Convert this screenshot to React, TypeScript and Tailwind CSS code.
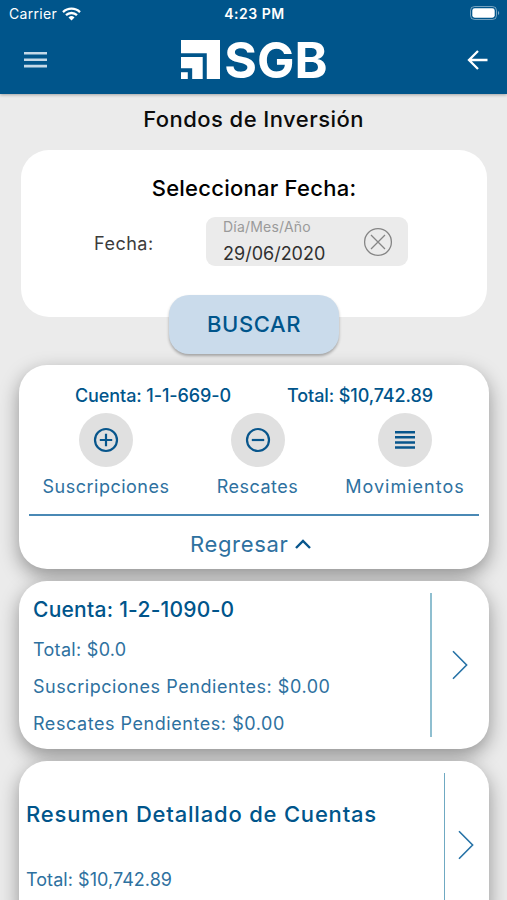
import React from 'react';

interface CardProps {
  children: React.ReactNode;
  className?: string;
}

const Card: React.FC<CardProps> = ({ children, className = '' }) => (
  <section className={`ml-[19px] w-[470px] rounded-[28px] bg-white shadow-[0_7px_19px_rgba(0,0,0,0.38)] ${className}`}>
    {children}
  </section>
);

interface ActionProps {
  label: string;
  labelClass?: string;
  children: React.ReactNode;
}

const Action: React.FC<ActionProps> = ({ label, labelClass = '', children }) => (
  <button className="flex flex-col items-center">
    <span className="flex h-[54px] w-[54px] items-center justify-center rounded-full bg-[#e0e0e0] text-[#08568c]">
      {children}
    </span>
    <span className={`mt-2 text-[18px] leading-6 text-[#2e71a0] ${labelClass}`}>{label}</span>
  </button>
);

const ChevronRight = () => (
  <svg width="16" height="30" viewBox="0 0 16 30" fill="none" stroke="#2672a6" strokeWidth="1.6">
    <path d="M1 1.2 14.6 15 1 28.8" />
  </svg>
);

const StatusBar = () => (
  <div className="flex h-7 items-center justify-between pr-[7px] pl-[9px] text-white">
    <div className="flex w-[90px] items-center gap-[5px] pb-px">
      <span className="text-[14px] tracking-[0.3px]">Carrier</span>
      <svg width="19" height="14" viewBox="0 0 19 14" fill="none" stroke="#fff">
        <path d="M1 5.1a12.2 12.2 0 0 1 17 0" strokeWidth="2.3" />
        <path d="M4 8.2a8 8 0 0 1 11 0" strokeWidth="2.3" />
        <path d="M6.5 10.5a4.4 4.4 0 0 1 6 0L9.5 13.6z" fill="#fff" stroke="none" />
      </svg>
    </div>
    <span className="pb-px text-[14px] font-semibold tracking-[0.5px]">4:23 PM</span>
    <div className="flex w-[90px] justify-end pb-[2px]">
      <svg width="30" height="14" viewBox="0 0 30 14">
        <rect x="0.5" y="0.5" width="26" height="13" rx="4" fill="none" stroke="#fff" strokeOpacity="0.45" />
        <rect x="2.3" y="2.3" width="22.4" height="9.4" rx="2.4" fill="#fff" />
        <path d="M28 5v4c1.6-.6 1.6-3.4 0-4z" fill="#fff" fillOpacity="0.5" />
      </svg>
    </div>
  </div>
);

const Toolbar = () => (
  <div className="flex h-16 items-center justify-between pr-[19px] pl-6">
    <svg width="23" height="16" viewBox="0 0 23 16" fill="#c4d9e8">
      <path d="M0 0h23v2.6H0zM0 6.4h23V9H0zM0 12.8h23v2.6H0z" />
    </svg>
    <div className="mr-[5px] flex h-10 items-center pb-px text-white">
      <svg width="39" height="39" viewBox="0 0 115 115" fill="#fff">
        <path d="M0 0h115v115H76V39H0z" />
        <path d="M0 50h64v65H33V83H0z" />
        <path d="M0 95h20v20H0z" />
      </svg>
      <span className="ml-1 text-[50px] leading-10 font-bold">SGB</span>
    </div>
    <svg width="21" height="20" viewBox="0 0 21 20" fill="none" stroke="#fff" strokeWidth="2.3">
      <path d="M20.5 10H2M11 1 2 10l9 9" />
    </svg>
  </div>
);

export default function App() {
  return (
    <div className="h-[900px] w-[507px] overflow-hidden bg-[#ebebeb] font-['Inter','Liberation_Sans',sans-serif] text-[#00558b]">
      <header className="h-[94px] bg-[#00558b] shadow-[0_1px_3px_rgba(0,0,0,0.3)]">
        <StatusBar />
        <Toolbar />
      </header>

      <h1 className="h-[56px] text-center text-[22px] leading-[50px] font-medium tracking-[0.45px] text-[#0c0c0c]">
        Fondos de Inversión
      </h1>

      <section className="ml-[21px] h-[167px] w-[466px] rounded-[28px] bg-white pt-6">
        <h2 className="text-center text-[22px] leading-7 font-medium tracking-[0.25px] text-black">Seleccionar Fecha:</h2>
        <div className="mt-[15px] flex h-[49px] items-center pl-[73px]">
          <span className="w-28 pt-[3px] text-[18px] tracking-[0.5px] text-[#3c3c3c]">Fecha:</span>
          <div className="flex h-[49px] w-[202px] items-start justify-between rounded-[9px] bg-[#ebebeb] pr-[15px] pl-[17px]">
            <div className="flex flex-col">
              <span className="text-[14px] leading-[19px] tracking-[0.2px] text-[#9a9a9a]">Día/Mes/Año</span>
              <span className="mt-[3px] text-[18px] leading-[29px] text-[#303030]">29/06/2020</span>
            </div>
            <svg className="mt-[10px]" width="30" height="30" viewBox="0 0 30 30" fill="none" stroke="#858585" strokeWidth="1.3">
              <circle cx="15" cy="15" r="13.4" />
              <path d="m8 8 14 14M22 8 8 22" />
            </svg>
          </div>
        </div>
      </section>

      <button className="relative -mt-[22px] ml-[169px] flex h-[59px] w-[170px] items-center justify-center rounded-[20px] bg-[#cadbeb] pb-px text-[22px] font-medium tracking-[0.6px] shadow-[0_2px_3px_rgba(0,0,0,0.3)]">
        BUSCAR
      </button>

      <Card className="mt-[11px] h-[204px] pt-[18px]">
        <div className="flex pl-14 text-[18px] leading-[26px] font-medium">
          <span className="w-[212px] tracking-[-0.1px]">Cuenta: 1-1-669-0</span>
          <span className="tracking-[-0.1px]">Total: $10,742.89</span>
        </div>
        <div className="mt-1 ml-[10px] grid grid-cols-[154px_149px_146px]">
          <Action label="Suscripciones" labelClass="tracking-[0.5px]">
            <svg width="26" height="26" viewBox="0 0 26 26" fill="none" stroke="currentColor" strokeWidth="2.2">
              <circle cx="13" cy="13" r="11" />
              <path d="M13 6.8v12.4M6.8 13h12.4" />
            </svg>
          </Action>
          <Action label="Rescates" labelClass="tracking-[0.5px]">
            <svg width="26" height="26" viewBox="0 0 26 26" fill="none" stroke="currentColor" strokeWidth="2.2">
              <circle cx="13" cy="13" r="11" />
              <path d="M6.8 13h12.4" />
            </svg>
          </Action>
          <Action label="Movimientos" labelClass="tracking-[1px]">
            <svg width="20" height="18" viewBox="0 0 20 18" fill="currentColor">
              <path d="M0 0h20v2.5H0zM0 5.1h20v2.5H0zM0 10.2h20v2.5H0zM0 15.3h20v2.5H0z" />
            </svg>
          </Action>
        </div>
        <hr className="mx-[10px] mt-[15px] h-[2px] border-0 bg-[#4a89b5]" />
        <button className="mt-[13px] ml-[171px] flex items-center gap-[7px] text-[22px] leading-[30px] tracking-[0.65px] text-[#2e71a0]">
          Regresar
          <svg width="16" height="10" viewBox="0 0 16 10" fill="none" stroke="#08568c" strokeWidth="2.4">
            <path d="m1 9 7-7 7 7" />
          </svg>
        </button>
      </Card>

      <Card className="mt-3 flex h-[168px]">
        <div className="w-[411px] pt-[14px] pl-[14px]">
          <h3 className="text-[21px] leading-[30px] font-medium tracking-[0.25px]">Cuenta: 1-2-1090-0</h3>
          <ul className="mt-[6px] text-[18px] leading-[37px] tracking-[0.55px] text-[#2e71a0]">
            <li className="tracking-[0.3px]">Total: $0.0</li>
            <li>Suscripciones Pendientes: $0.00</li>
            <li>Rescates Pendientes: $0.00</li>
          </ul>
        </div>
        <div className="mt-3 h-[144px] w-[2px] bg-[#8fbfd0]" />
        <div className="flex items-center pl-5">
          <ChevronRight />
        </div>
      </Card>

      <Card className="mt-3 flex h-[168px]">
        <div className="w-[425px] pt-[38px] pl-[7px]">
          <h3 className="text-[22px] leading-[30px] font-medium tracking-[0.8px]">Resumen Detallado de Cuentas</h3>
          <p className="mt-9 text-[18px] leading-[30px] tracking-[0.05px] text-[#2e71a0]">Total: $10,742.89</p>
        </div>
        <div className="mt-3 h-[168px] w-px bg-[#6fa9c2]" />
        <div className="flex items-center pl-[13px]">
          <ChevronRight />
        </div>
      </Card>
    </div>
  );
}
